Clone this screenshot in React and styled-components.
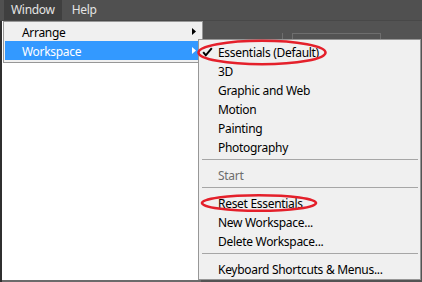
import React from "react";
import styled, { createGlobalStyle } from "styled-components";

const Global = createGlobalStyle`
  html, body { margin: 0; padding: 0; background: #535353; }
  * { box-sizing: border-box; }
`;

const Screen = styled.div`
  position: relative;
  width: 422px;
  height: 282px;
  overflow: hidden;
  display: flex;
  flex-direction: column;
  background: #535353;
  font-family: "Noto Sans", "Open Sans", sans-serif;
  font-size: 12px;
  letter-spacing: -0.3px;
`;

const MenuBar = styled.div`
  flex: none;
  height: 21px;
  display: flex;
  align-items: flex-start;
  gap: 3px;
  padding-left: 4px;
  background: #505050;
  box-shadow: inset 0 -1px 0 #484848;
`;

const MenuTitle = styled.div`
  height: 20px;
  line-height: 20px;
  padding: 0 7px;
  color: #e4e4e4;
  background: ${(p) => (p.$active ? "#3f3f3f" : "transparent")};
`;

const Body = styled.div`
  flex: 1;
  display: flex;
  min-height: 0;
`;

const LeftEdge = styled.div`
  width: 2px;
  background: #2f2f2f;
`;

const DocPanel = styled.div`
  width: 199px;
  background: #ffffff;
  border-bottom: 2px solid #6b6b6b;
`;

const SidePanel = styled.div`
  flex: 1;
  display: flex;
  align-items: flex-start;
  gap: 9px;
  padding: 12px 0 0 81px;
  background: #535353;
`;

const ToolDivider = styled.div`
  width: 1px;
  height: 30px;
  background: #6e6e6e;
`;

const ToolField = styled.div`
  width: 89px;
  height: 30px;
  border: 1px solid #6e6e6e;
`;

const Dropdown = styled.div`
  position: absolute;
  left: 3px;
  top: 21px;
  width: 200px;
  padding: 0 0 2px;
  background: #f0f0f0;
  border: 1px solid #979797;
`;

const MenuRow = styled.div`
  height: 19px;
  margin: 0 1px;
  display: flex;
  align-items: center;
  padding: 2px 5px 0 17px;
  color: ${(p) => (p.$highlight ? "#ffffff" : "#000000")};
  background: ${(p) => (p.$highlight ? "#3399ff" : "transparent")};
`;

const ArrowIcon = styled.svg`
  margin-left: auto;
  margin-top: -2px;
  flex: none;
`;

const Submenu = styled.div`
  position: absolute;
  left: 198px;
  top: 39px;
  width: 223px;
  padding: 2px 0 1px;
  background: #f0f0f0;
  border: 1px solid #979797;
`;

const SubRow = styled.div`
  height: 19px;
  display: flex;
  align-items: center;
  padding-top: 2px;
  color: ${(p) => (p.$disabled ? "#6d6d6d" : "#000000")};
`;

const CheckCell = styled.div`
  width: 19px;
  flex: none;
  display: flex;
  align-items: center;
  padding-left: 3px;
  margin-top: -2px;
`;

const Separator = styled.div`
  height: 1px;
  margin: 3px 2px 5px 3px;
  background: #a6a6a6;
`;

const Annotation = styled.svg`
  position: absolute;
  left: 0;
  top: 0;
  pointer-events: none;
`;

const Arrow = ({ color }) => (
  <ArrowIcon width="4" height="7" viewBox="0 0 4 7">
    <polygon points="0,0 4,3.5 0,7" fill={color} />
  </ArrowIcon>
);

const Check = () => (
  <svg width="11" height="10" viewBox="0 0 11 10">
    <path d="M1.2 5.2 L3.8 8.3 L9.8 1.2" fill="none" stroke="#000" strokeWidth="2" />
  </svg>
);

const groups = [
  [
    { label: "Essentials (Default)", checked: true },
    { label: "3D" },
    { label: "Graphic and Web" },
    { label: "Motion" },
    { label: "Painting" },
    { label: "Photography" },
  ],
  [{ label: "Start", disabled: true }],
  [{ label: "Reset Essentials" }, { label: "New Workspace..." }, { label: "Delete Workspace..." }],
  [{ label: "Keyboard Shortcuts & Menus..." }],
];

export default function App() {
  return (
    <>
      <Global />
      <Screen>
        <MenuBar>
          <MenuTitle $active>Window</MenuTitle>
          <MenuTitle>Help</MenuTitle>
        </MenuBar>
        <Body>
          <LeftEdge />
          <DocPanel />
          <SidePanel>
            <ToolDivider />
            <ToolField />
          </SidePanel>
        </Body>

        <Dropdown>
          <MenuRow>
            Arrange
            <Arrow color="#000" />
          </MenuRow>
          <MenuRow $highlight>
            Workspace
            <Arrow color="#ffffff" />
          </MenuRow>
        </Dropdown>

        <Submenu>
          {groups.map((g, gi) => (
            <React.Fragment key={gi}>
              {gi > 0 && <Separator />}
              {g.map((it) => (
                <SubRow key={it.label} $disabled={it.disabled}>
                  <CheckCell>{it.checked && <Check />}</CheckCell>
                  {it.label}
                </SubRow>
              ))}
            </React.Fragment>
          ))}
        </Submenu>

        <Annotation width="422" height="282" viewBox="0 0 422 282">
          <ellipse cx="262" cy="52.5" rx="63.5" ry="11.8" fill="none" stroke="#e4202b" strokeWidth="2.6" />
          <ellipse cx="259" cy="203" rx="57" ry="7.8" fill="none" stroke="#e4202b" strokeWidth="2.6" />
        </Annotation>
      </Screen>
    </>
  );
}
